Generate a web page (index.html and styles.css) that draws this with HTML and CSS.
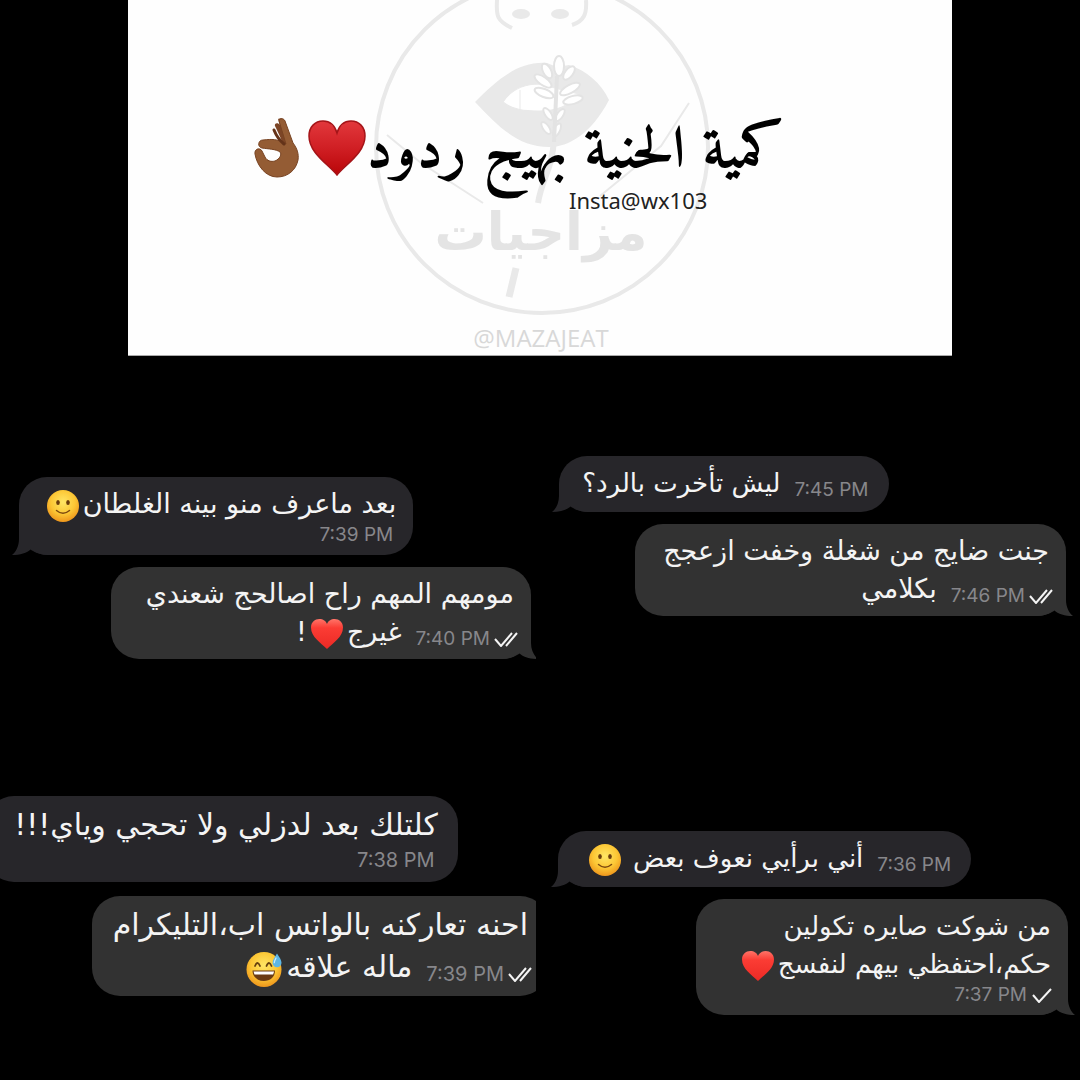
FILE: index.html
```html
<!DOCTYPE html>
<html lang="ar">
<head>
<meta charset="utf-8">
<meta name="viewport" content="width=device-width, initial-scale=1">
<title>كمية الحنية بهيج ردود</title>
<link rel="stylesheet" href="styles.css">
</head>
<body>
<svg class="defs" aria-hidden="true">
  <defs>
    <radialGradient id="face" cx="50%" cy="38%" r="62%">
      <stop offset="0" stop-color="#ffe665"/><stop offset=".6" stop-color="#fcc735"/><stop offset="1" stop-color="#ee961c"/>
    </radialGradient>
    <linearGradient id="red" x1="0" y1="0" x2="0" y2="1">
      <stop offset="0" stop-color="#ff7468"/><stop offset=".3" stop-color="#fb3c34"/><stop offset="1" stop-color="#ec2a25"/>
    </linearGradient>
    <linearGradient id="suit" x1="0" y1="0" x2="0" y2="1">
      <stop offset="0" stop-color="#e2383c"/><stop offset=".5" stop-color="#d01f24"/><stop offset="1" stop-color="#b90508"/>
    </linearGradient>
    <symbol id="tail" viewBox="0 0 36 28"><path d="M7 0v12c0 7-3 13-7 16 8 0 15-2 19-6 5 4 11 6 17 6V0z"/></symbol>
    <symbol id="read" viewBox="0 0 24 16"><path d="M1 8l6 7L18 2M12 15L23 2"/></symbol>
    <symbol id="sent" viewBox="0 0 24 16"><path d="M2 8l6 7L20 2"/></symbol>
    <symbol id="smile" viewBox="0 0 32 32">
      <circle cx="16" cy="16" r="16" fill="url(#face)"/>
      <ellipse cx="11" cy="12.500" rx="1.800" ry="2.600" fill="#6b3d0c"/><ellipse cx="21" cy="12.500" rx="1.800" ry="2.600" fill="#6b3d0c"/>
      <path d="M9.500 20.500q6.500 5.500 13 0" fill="none" stroke="#7d4a10" stroke-width="1.500" stroke-linecap="round"/>
    </symbol>
    <symbol id="heart" viewBox="0 0 32 32">
      <path d="M16 31C10 25 0 19 0 9.500 0 4 4 1 8.300 1 12 1 15 3 16 6c1-3 4-5 7.700-5C28 1 32 4 32 9.500 32 19 22 25 16 31z" fill="url(#red)"/>
    </symbol>
    <symbol id="sweat" viewBox="0 0 36 36">
      <circle cx="18" cy="18.500" r="17.500" fill="url(#face)"/>
      <path d="M9 15q2.500-6 5 0M20.500 15q2.500-6 5 0" fill="none" stroke="#65400f" stroke-width="1.800" stroke-linecap="round"/>
      <path d="M6.500 19.500h22.500c0 6.500-5 10.500-11.200 10.500S6.500 26 6.500 19.500z" fill="#6b3b14"/>
      <path d="M7.500 20.500h20.600l-1 3H8.500z" fill="#fff"/>
      <path d="M31 2.500c2.500 4 4.500 6.500 4.500 9.300A4.400 4.400 0 0 1 31 16.200a4.400 4.400 0 0 1-4.400-4.400c0-2.800 2-5.300 4.400-9.300z" fill="#5eb6e4"/>
      <path d="M30 7c-1 2-1.700 3-1.700 4.700" fill="none" stroke="#c7ecfb" stroke-width="1.300" stroke-linecap="round"/>
    </symbol>
  </defs>
</svg>

<header class="card">
  <svg class="watermark" viewBox="128 0 824 356" preserveAspectRatio="xMidYMin slice" aria-hidden="true">
    <g fill="none" stroke="#e9e9e9" stroke-width="4">
      <circle cx="542" cy="147" r="166"/>
      <path d="M497 0c-1 16 0 21 15 28M586 0c1 14-2 21-14 25"/>
      <path d="M387 135l34 28 62 40M689 103l-28 43-61 50" stroke-width="2"/>
      <path d="M554 140c-2 30-12 38-16 63" stroke-width="6"/>
      <path d="M516 268l-7 29" stroke-width="7"/>
    </g>
    <g fill="#e9e9e9">
      <ellipse cx="521" cy="14" rx="9" ry="5"/><ellipse cx="560" cy="14" rx="9" ry="5"/>
      <path d="M475 102c22-22 43-41 72-39l10 4 12-2c18 6 32 18 40 35-18 34-40 47-60 47-32 0-52-22-74-45z"/>
    </g>
    <path d="M503 102c8-12 20-18 36-18l40 10c-10 12-22 17-40 17-14 0-26-1-36-9zM520 90v19" fill="#fff" stroke="#e9e9e9"/>
    <g fill="#fff" stroke="#e3e3e3" stroke-width="2">
      <ellipse cx="559" cy="66" rx="5" ry="10"/>
      <ellipse cx="547" cy="71" rx="4" ry="8" transform="rotate(-28 547 71)"/>
      <ellipse cx="569" cy="73" rx="4" ry="8" transform="rotate(38 569 73)"/>
      <ellipse cx="543" cy="81" rx="4" ry="10" transform="rotate(-55 543 81)"/>
      <ellipse cx="570" cy="89" rx="4" ry="11" transform="rotate(62 570 89)"/>
      <ellipse cx="544" cy="93" rx="4" ry="10" transform="rotate(-68 544 93)"/>
      <ellipse cx="573" cy="100" rx="4" ry="10" transform="rotate(75 573 100)"/>
      <ellipse cx="548" cy="114" rx="3" ry="7" transform="rotate(-35 548 114)"/>
      <ellipse cx="560" cy="115" rx="3" ry="7" transform="rotate(35 560 115)"/>
      <ellipse cx="546" cy="128" rx="3" ry="7" transform="rotate(-35 546 128)"/>
      <ellipse cx="557" cy="130" rx="3" ry="7" transform="rotate(25 557 130)"/>
    </g>
    <path d="M557 76l-3 66" stroke="#e3e3e3" stroke-width="4"/>
    <text class="brand" x="541" y="250" text-anchor="middle">مزاجيات</text>
    <text class="handle" x="541" y="347" text-anchor="middle">@MAZAJEAT</text>
  </svg>
  <h1 class="title" dir="rtl">
    <span>كمية الحنية بهيج ردود</span>
    <svg class="title-heart" viewBox="0 0 58 56" role="img" aria-label="♥"><path d="M29 55C20 44 1 33 1 16 1 7 7 1 15 1c7 0 12 5 14 12C31 6 36 1 43 1c8 0 14 6 14 15 0 17-19 28-28 39z" fill="url(#suit)" stroke="#a51418" stroke-width="1.500"/></svg>
    <svg class="title-hand" viewBox="0 0 46 60" role="img" aria-label="👌🏾">
      <path d="M24 1c2-1 5-1 6 1l6 18 1 9-8-3C26 18 22 10 21 8c-1-3 3-4 5-1z" fill="#7c4526"/>
      <path fill-rule="evenodd" d="M25 3c0-3 5-3 6 0l8 22c4 5 6 11 5 17-2 10-10 17-21 17C12 59 3 48 1 36c-1-5 5-7 7-3l3 6c2 4 6 5 10 4 5-2 7-7 5-9-4-3-12-3-18-4-5-1-4-8 1-8 9-1 15-1 20 3l3 1z" fill="#945c34" stroke="#784322"/>
      <path d="M20 12c2 5 5 10 10 14" fill="none" stroke="#643319" stroke-width="3" stroke-linecap="round"/>
    </svg>
  </h1>
  <p class="credit">Insta@wx103</p>
</header>

<main class="chats">
  <section class="chat chat-a">
    <article class="bubble in w-a1">
      <svg class="tail" aria-hidden="true"><use href="#tail"/></svg>
      <p class="line">بعد ماعرف منو بينه الغلطان<svg class="emoji" role="img" aria-label="🙂"><use href="#smile"/></svg></p>
      <div class="meta"><time>7:39 PM</time></div>
    </article>
    <article class="bubble out w-a2">
      <svg class="tail" aria-hidden="true"><use href="#tail"/></svg>
      <p class="line">مومهم المهم راح اصالحج شعندي</p>
      <div class="row">
        <div class="meta"><time>7:40 PM</time><svg class="check" role="img" aria-label="Read"><use href="#read"/></svg></div>
        <p class="line">غيرج<svg class="emoji" role="img" aria-label="❤️"><use href="#heart"/></svg>!</p>
      </div>
    </article>
  </section>

  <section class="chat chat-b">
    <article class="bubble in compact w-b1">
      <svg class="tail" aria-hidden="true"><use href="#tail"/></svg>
      <div class="row">
        <div class="meta"><time>7:45 PM</time></div>
        <p class="line">ليش تأخرت بالرد؟</p>
      </div>
    </article>
    <article class="bubble out w-b2">
      <svg class="tail" aria-hidden="true"><use href="#tail"/></svg>
      <p class="line">جنت ضايج من شغلة وخفت ازعجج</p>
      <div class="row">
        <div class="meta"><time>7:46 PM</time><svg class="check" role="img" aria-label="Read"><use href="#read"/></svg></div>
        <p class="line">بكلامي</p>
      </div>
    </article>
  </section>

  <section class="chat chat-c">
    <article class="bubble in w-c1">
      <p class="line">كلتلك بعد لدزلي ولا تحجي وياي!!!</p>
      <div class="meta"><time>7:38 PM</time></div>
    </article>
    <article class="bubble out w-c2">
      <p class="line">احنه تعاركنه بالواتس اب،التليكرام</p>
      <div class="row">
        <div class="meta"><time>7:39 PM</time><svg class="check" role="img" aria-label="Read"><use href="#read"/></svg></div>
        <p class="line">ماله علاقه<svg class="emoji" role="img" aria-label="😅"><use href="#sweat"/></svg></p>
      </div>
    </article>
  </section>

  <section class="chat chat-d">
    <article class="bubble in compact w-d1">
      <svg class="tail" aria-hidden="true"><use href="#tail"/></svg>
      <div class="row">
        <div class="meta"><time>7:36 PM</time></div>
        <p class="line">أني برأيي نعوف بعض <svg class="emoji" role="img" aria-label="🙂"><use href="#smile"/></svg></p>
      </div>
    </article>
    <article class="bubble out compact w-d2">
      <svg class="tail" aria-hidden="true"><use href="#tail"/></svg>
      <p class="line">من شوكت صايره تكولين</p>
      <p class="line">حكم،احتفظي بيهم لنفسج<svg class="emoji" role="img" aria-label="❤️"><use href="#heart"/></svg></p>
      <div class="meta"><time>7:37 PM</time><svg class="check" role="img" aria-label="Sent"><use href="#sent"/></svg></div>
    </article>
  </section>
</main>
</body>
</html>
```
FILE: styles.css
```css
* { box-sizing: border-box; }

body {
  margin: 0;
  background: #000;
  color: #f4f4f4;
  font-family: "DejaVu Sans", sans-serif;
}

h1, p { margin: 0; }

.defs { position: absolute; width: 0; height: 0; }

/* Title card */
.card {
  position: relative;
  width: 76.3%;
  min-height: 356px;
  margin: 0 auto;
  padding-top: 112px;
  background: #fefefe;
  color: #000;
  border-bottom: 1px solid #aaa;
}

.watermark { position: absolute; inset: 0; width: 100%; height: 100%; }

.brand {
  font: bold 52px "DejaVu Sans", sans-serif;
  fill: #e4e4e4;
}

.handle {
  font: 24px "Open Sans", sans-serif;
  fill: #d8d8d8;
}

.title {
  position: relative;
  display: flex;
  align-items: center;
  height: 72px;
  padding-right: 168px;
  font: bold 59px "Amiri", "DejaVu Sans", serif;
  white-space: nowrap;
}

.title span { padding-top: 8px; }
.title-heart { width: 58px; height: 56px; flex: none; }
.title-hand { width: 46px; height: 60px; margin-right: 8px; flex: none; }

.credit {
  position: relative;
  padding-left: 441px;
  color: #222;
  font: 22px/32px "Noto Sans", sans-serif;
}

/* Conversations */
.chats {
  display: grid;
  grid-template-columns: 1fr 1fr;
  grid-auto-rows: minmax(362px, auto);
  column-gap: 8px;
}

.chat {
  display: flex;
  flex-direction: column;
  gap: 12px;
  min-width: 0;
}

.chat-a { padding: 121px 5px 0 19px; overflow: hidden; }
.chat-b { padding: 100px 14px 0 15px; }
.chat-c { padding: 78px 0 0; overflow: hidden; gap: 14px; }
.chat-d { padding: 113px 12px 0 14px; }

.bubble {
  position: relative;
  isolation: isolate;
  min-height: 56px;
  padding: 8px 17px;
  border-radius: 28px;
  direction: rtl;
}

.in { align-self: flex-start; background: #27262a; }
.out { align-self: flex-end; background: #323232; }

.w-a1 { width: 77%; }
.w-a2 { width: 82%; }
.w-b1 { width: 65%; }
.w-b2 { width: 85%; }
.w-c1 { width: 88%; margin-left: -14px; }
.w-c2 { width: 85%; margin-right: -12px; }
.w-d1 { width: 81%; }
.w-d2 { width: 73%; }

.tail { position: absolute; z-index: -1; bottom: 0; width: 36px; height: 28px; }
.in .tail { left: -7px; fill: #27262a; }
.out .tail { right: -7px; fill: #323232; transform: scaleX(-1); }

.line { font-size: 27px; line-height: 38px; white-space: nowrap; }
.compact .line { font-size: 26px; }
.chat-c .line { font-size: 30px; line-height: 42px; }

.row { display: flex; align-items: flex-end; gap: 14px; }

.meta {
  display: flex;
  flex: none;
  align-items: center;
  gap: 4px;
  direction: ltr;
  justify-content: flex-end;
  color: #87878b;
  font: 19px/24px "Inter", sans-serif;
}

.in .meta { margin-right: 3px; }
.out .meta { margin-right: -4px; }

.chat-c .bubble { padding: 8px 20px; }
.chat-c .meta { font-size: 20px; line-height: 28px; }

.check {
  flex: none;
  width: 24px;
  height: 16px;
  fill: none;
  stroke: #f4f4f4;
  stroke-width: 2;
}

.emoji { width: 32px; height: 32px; margin: 0 4px; vertical-align: middle; }
.chat-c .emoji { width: 36px; height: 36px; }
```
